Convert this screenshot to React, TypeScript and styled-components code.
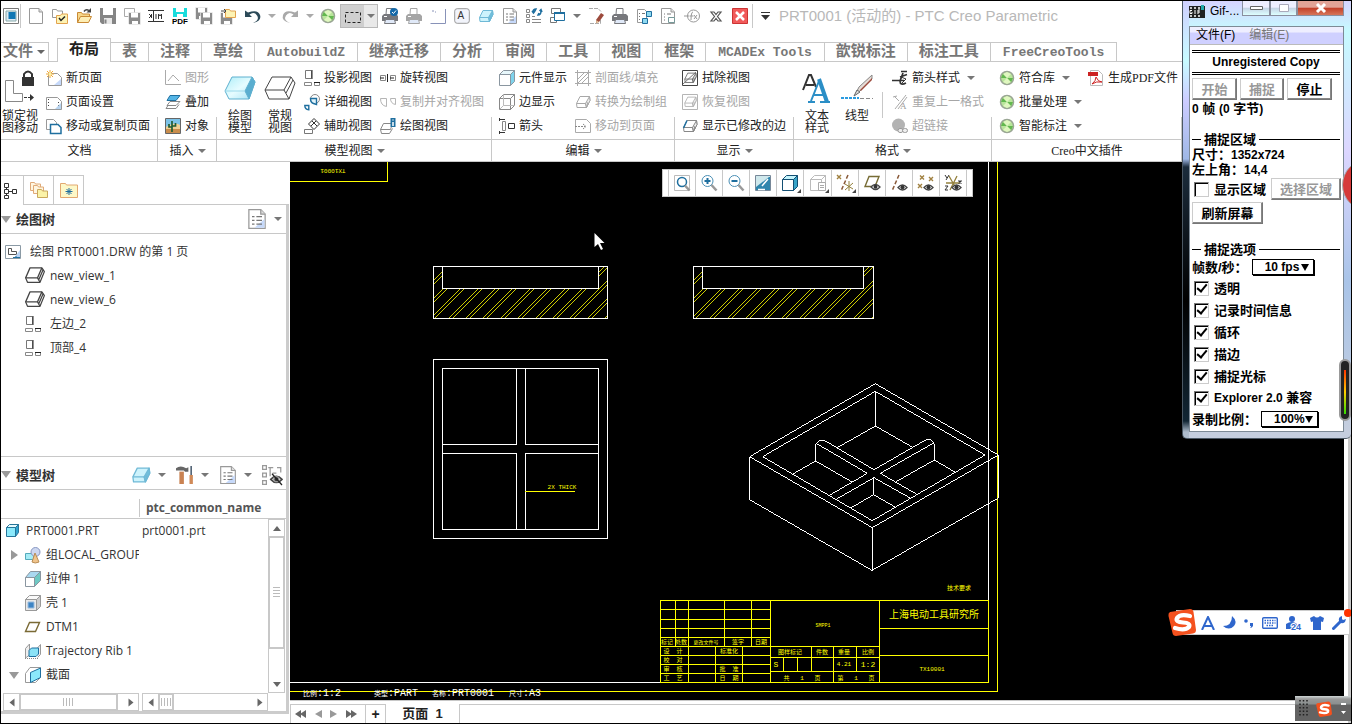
import React from 'react';
import styled, { createGlobalStyle, css } from 'styled-components';

const line = '#c8c8c8';
const sans = '"Liberation Sans", "Noto Sans CJK SC", sans-serif';
const tree = '"Open Sans", "Noto Sans CJK SC", sans-serif';

const GlobalStyle = createGlobalStyle`
  * { box-sizing: border-box; }
  body { margin: 0; background: #fff; color: #222; font: 12px/16px ${sans}; }
  button, input, select { font: inherit; color: inherit; margin: 0; }
  button { background: none; border: 0; padding: 0; cursor: pointer; }
  svg { display: block; flex: none; }
`;

/* ---------- icons ---------- */

const B = '#1f6f9f';

const box3d = (fill: string, side: string, stroke: string) => (
  <g stroke={stroke} strokeLinejoin="round">
    <path d="M1.5 9.5 5 2.5h9.5l.5 4-3.500 7H2z" fill={fill} />
    <path d="M10.500 9.500 14.500 2.500l.5 4-3.500 7z" fill={side} />
    <path d="M1.500 9.500h9l1 4M12 8l.8 3" fill="none" />
  </g>
);
const wireBox = (
  <g fill="#fff" stroke="#444" strokeLinejoin="round">
    <path d="M.5 9.500 4 1.500h9.500l2 3L12 13H2z" />
    <path d="M.5 9.500h9.500l2 3.500M10 9.500l3.500-8M11 11l3.500-8" fill="none" />
  </g>
);
const cube = (front: string, top: string, side: string, stroke: string) => (
  <g stroke={stroke} strokeLinejoin="round">
    <path d="M.5 4.500h11v11H.5z" fill={front} />
    <path d="m.5 4.500 4-4h11l-4 4z" fill={top} />
    <path d="m11.500 4.500 4-4v11l-4 4z" fill={side} />
  </g>
);
const page = (stroke = '#999') => (
  <g stroke={stroke} fill="#fff">
    <path d="M1.500.5h9.500l3.500 3.500v11.500h-13z" />
    <path d="M11 .5V4h3.500" fill="#ddd" />
  </g>
);
const listPage = (
  <g>
    {page()}
    <path d="m14 8-8 7h8z" fill="#c6d9fa" />
    <path d="M4 6h2M4 9h2M4 12h2M7.500 6H12M7.500 9H12M7.500 12H12" stroke="#777" />
  </g>
);
const disk = (x = 0, y = 0, c = '#858585') => (
  <g transform={`translate(${x} ${y})`}>
    <path d="M0 0h16v16H2l-2-2z" fill={c} />
    <path d="M3 0h10v7H3z" fill="#fff" />
    <path d="M4 10h8v6H4z" fill="#e8e8e8" />
    <path d="M5.500 11.500v4" stroke={c} strokeWidth="2" />
  </g>
);
const smallDisk = (x: number, y: number) => (
  <g transform={`translate(${x} ${y})`}>
    <path d="M-.5-.5h12v12h-11l-1-1z" fill="#8b8b8b" stroke="#fff" strokeWidth=".6" />
    <path d="M2 0h7v4.500H2zM3 8h6v3H3z" fill="#fff" />
  </g>
);
const folder = (x = 0, y = 0, s = '#e2a24e', f = '#fdf3b4') => (
  <path transform={`translate(${x} ${y})`} d="M.5 9.500v-8h4l1 1.500h5v6.500z" fill={f} stroke={s} />
);
const printer = (c: string) => (
  <g>
    <path d="M4.500.5h6.500v6h-7z" fill="#fff" stroke={c} />
    <path d="M2 6h12l2 2v5H0V8z" fill={c} />
    <path d="M3.500 11.500h9l1 4h-11z" fill="#e0e9f8" stroke={c} />
    <path d="M2 8.500h3" stroke="#fff" />
  </g>
);
const green = (
  <g>
    <circle cx="8" cy="8" r="6.500" fill="#b9e59b" stroke="#9aa694" strokeWidth="1.500" />
    <path d="M2 8 8 8 4 3.500M14 8H8l4 4.500" fill="#63b84f" />
    <path d="M4 4 8 8l4-4-4-2zM4 12l4-4 4 4-4 2z" fill="#e4f8c4" opacity=".9" />
  </g>
);
const viewTrio = (
  <g fill="#fff">
    <path d="M1.500.500h6v8h-6z" stroke="#777" />
    <path d="M8 0v9" stroke="#222" />
    <path d="M.5 12.500h7v3h-7zM10.500 12.500h5v3h-5z" stroke="#888" />
    <path d="M10 12.500h6" stroke="#222" />
  </g>
);
const eye = (x: number, y: number) => (
  <g transform={`translate(${x} ${y})`}>
    <path d="M0 3.500Q4.500-1.500 9 3.500 4.500 8.500 0 3.500z" fill="#fff" stroke="#444" strokeWidth="1.300" />
    <circle cx="4.500" cy="3.300" r="2" fill="#333" />
  </g>
);
const cross = (x: number, y: number, c = '#a08040', r = 2) => (
  <path d={`M${x - r} ${y - r}l${2 * r} ${2 * r}M${x + r} ${y - r}l${-2 * r} ${2 * r}`} stroke={c} strokeWidth="1.400" />
);

const icons: Record<string, React.ReactNode> = {
  window: <g><path d="M.5.5h15v15H.5z" fill="#fff" stroke="#777" /><path d="M3 3h10v10H3z" fill="#dce9f3" stroke="#8aa" /><path d="M5.500 4h7v7h-7z" fill="#1278b4" /></g>,
  newFile: page(),
  checkFiles: <g>{folder(0, 0, '#999', '#fff')}<path d="M4.500 15.500v-8h4l1-1.500h6v9.500z" fill="#fdf3b4" stroke="#e2a24e" /><path d="m7 10 2 2.500 4-4" stroke="#222" fill="none" strokeWidth="1.500" /></g>,
  open: <g><path d="M1.500 14.500v-10h4l1 1.500h7v3" fill="#f7d78a" stroke="#c98a35" /><path d="m1.500 14.500 3-6h11l-3 6z" fill="#fdeeb5" stroke="#c98a35" /><path d="M8 3.500q2-3 5-1" stroke="#444" fill="none" strokeWidth="1.500" /><path d="M15 0v4.500h-4.500z" fill="#444" /></g>,
  disk: disk(),
  disks: <g><path d="M.5.500h10v8H.5z" fill="#fff" stroke="#aaa" />{smallDisk(5, 5)}</g>,
  dim: <g stroke="#333" fill="none"><path d="M0 2.500h16M0 13.500h16M5.500 3v10M1 6l2 2-2 2M3.500 6v4M8 6v5M10.500 11V6l1.500 2 1.500-2v5" /></g>,
  pdfDisk: <g><path d="M1 0h14v9H1z" fill="#19dcdc" /><path d="M4 0h8v4H4zM5 6h6v3H5z" fill="#fff" /><text x="0" y="16" fontSize="8" fontWeight="700" fill="#000" fontFamily="Liberation Sans">PDF</text></g>,
  copyDisk: <g>{smallDisk(0, 0)}{smallDisk(5, 5)}</g>,
  swapDisk: <g>{smallDisk(1, 5)}{folder(5, 0)}<path d="M1 3h4M4 1l2 2-2 2" stroke="#444" fill="none" /></g>,
  undo: <path d="M1 2.500v6.500h7L5.500 6.500Q10 3 13 7.500T9 15q9-2 7-8T4 4.500z" fill="#2c4a58" />,
  redo: <path d="M15 2.500V9H8l2.500-2.500Q6 3 3 7.500T7 15q-9-2-7-8t12-2.500z" fill="#a9a9a9" />,
  green,
  marquee: <path d="M.5 3.500h15v10H.5z" fill="none" stroke="#222" strokeDasharray="3 2" />,
  printOk: <g>{printer('#77787c')}<circle cx="12" cy="4" r="4" fill="#1468a8" /><path d="m10 4 1.500 1.500L14 2.500" stroke="#fff" fill="none" /></g>,
  printGray: printer('#a5a5a5'),
  print: printer('#77787c'),
  corner: <path d="M.5 15.500h15V1M2 3h2M5 4h1" stroke="#8892b8" fill="none" />,
  letterA: <g><rect x=".7" y=".7" width="14.600" height="14.600" rx="2.500" fill="#f2f4fb" stroke="#999" /><text x="3.500" y="11" fontSize="10" fill="#333" fontFamily="Liberation Sans">A</text></g>,
  blueBox: box3d('#cdf3fc', '#6fbfdc', '#6fb9d6'),
  list: listPage,
  listSync: <g><path d="M.5 1.500h3v3h-3zM.5 6.500h3v3h-3zM.5 11.500h3v3h-3z" fill="#fff" stroke="#888" /><path d="M6 8.500h3M6 11.500h9M6 14.500h9" stroke="#888" /><path d="M7 4q0-3 3-3l-1 2M15 3q0 4-3 4l1-2M6 3l1.500 2L9 3M13.500 3 15 1.500 16 4" stroke={B} fill="none" strokeWidth="1.500" /></g>,
  cascade: <g fill="#fff"><path d="M1.500.5h9v5h-9zM.5 9.500h6v5h-6z" stroke="#777" /><path d="M4.500 4.500h10v8h-10z" stroke={B} /><path d="M4 5h11" stroke={B} strokeWidth="2" /></g>,
  erasePage: <g><path d="M1 .5h9l3 3M12.500 12v3.500H1" fill="none" stroke="#aaa" strokeDasharray="4 1" /><path d="m8 12 5-7 3 2-5 7-3 1z" fill="#9c4a3c" /><path d="m8 12 3 2-2.500 1.500z" fill="#e7c9a0" /></g>,
  views: <g><path d="M1.500 1.500h7l2 2v11h-9z" fill="#fff" stroke="#999" /><path d="M3 5.500h1M3 8.500h1M3 11.500h1M6 5.500h3" stroke="#777" /><path d="M10.500 3.500h5v5h-5zM6.500 10.500h5v5h-5z" fill="#8fd9f0" stroke={B} /></g>,
  pageCube: <g>{page()}<path d="M4 6h1M4 9h1M4 12h1M7 6h4" stroke="#777" /><path d="M8.500 9.500h6v5h-6z" fill="#fff" stroke="#799" /></g>,
  fx: <g fill="none" stroke="#999"><circle cx="9.500" cy="8" r="6" /><path d="M0 8h5M9 4q-2 0-2 8M5.500 8h4M10 7l3 4M13 7l-3 4" /></g>,
  closeX: <g stroke="#555" fill="#fff" strokeWidth="1.200"><path d="M3 4h3l2 2.500L10 4h3l-3.500 4.500L13 13h-3l-2-2.500L6 13H3l3.500-4.500z" /></g>,
  redX: <g><path d="M.5.500h15v15H.5z" fill="#f15a5a" stroke="#c33" /><path d="m4 4 8 8M12 4l-8 8" stroke="#fff" strokeWidth="2.500" /></g>,
  newPage: <g><path d="M2.500 3.500h9l4 4v8h-13z" fill="#fff" stroke="#999" /><path d="m15 9-7 6h7z" fill="#c6d9fa" /><path d="M4 0v8M0 4h8M1 1l6 6M7 1 1 7" stroke="#f0a93a" /><circle cx="4" cy="4" r="1.500" fill="#fff3a0" /></g>,
  pageSetup: <g><path d="M.5 3.500h11l4 4v8H.5z" fill="#fff" stroke="#999" /><path d="M2.500 5v9M12.500 8v6" stroke="#444" strokeDasharray="1 2" /><path d="m15 9-6 6h6z" fill="#b8d4f0" /></g>,
  movePage: <g fill="#fff"><path d="M.5 1.500h7l3 3v7H.5z" stroke="#999" /><path d="M4.500 6.500H12l3 3v6H4.500z" stroke={B} strokeWidth="1.500" /></g>,
  graph: <path d="M.5 0v14.500H16M3 11l5-6 6 6" fill="none" stroke="#aaa" />,
  overlay: <g fill="#fff" stroke="#888"><path d="m5 1.500-3 5h9l4-5z" fill="#54b5e6" stroke={B} /><path d="m5 7.500-3 4h9l4-4zM3 11.500l-2 3h10l3-4" /></g>,
  object: <g><path d="M.5.5h15v15H.5z" fill="#7cc3e8" stroke="#666" /><path d="M1 11h14v4H1z" fill="#c98d4c" /><path d="M1 9q9-6 14-2v4H1z" fill="#f1cf92" /><path d="M7 14V3M4 6v3h3M10.500 5v3H7" stroke="#205e35" strokeWidth="1.700" fill="none" /></g>,
  viewTrio,
  detail: <g fill="none"><circle cx="11" cy="5" r="4.500" stroke="#888" /><path d="M6.500 4.500h6v6l-3-1q-3-1-3-5z" stroke={B} strokeWidth="1.400" fill="#e1f3fa" /><path d="M.8 11.500h4v4.300q-4-.5-4-4.300z" stroke={B} strokeWidth="1.400" /></g>,
  auxiliary: <g fill="#fff" stroke="#777"><path d="m10 .5 5.500 5.500-5.500 5.500L4.500 6z" stroke="#333" /><path d="m8 3 5 5M12 3 7 8" stroke="#333" /><path d="M.5 11.500h8v4h-8z" /></g>,
  revolved: <g fill="#fff" stroke="#888"><path d="M.5 5.500h5v5h-5zM10.500 5.500h5v5h-5z" /><path d="M0 8h4M7.500 4v8M10 8h4" stroke="#222" /></g>,
  alignViews: <g fill="none" stroke="#b5b5b5"><path d="M.5 4.500h6v8q-6-1-6-8zM10.500 4.500h5v6q-5-1-5-6z" /></g>,
  drawView: <g>{<path d="m.5 11.500 3-6h9l-2 6zM.5 11.500l1 4h8l3-5" fill="#fff" stroke="#888" />}<path d="M10.500 0h5v9h-5z" fill={B} /><path d="M13 1.500v1M13 4v4" stroke="#fff" strokeWidth="1.500" /></g>,
  partDisplay: cube('#fff', '#e8f8fc', '#7fd3ec', '#8a96a0'),
  edgeDisplay: <g>{cube('#fff', '#fff', '#fff', '#888')}<path d="M4.500.5v11h11M4.500 11.500l-4 4" stroke="#bbb" fill="none" /></g>,
  arrowView: <g fill="#fff" stroke="#333"><path d="M3.500 3.500h3v9h-3z" stroke="#888" /><path d="M0 1.500h6M0 14.500h6" /><path d="M.5 0v3M.5 13v3M9.500 5.500h6v5h-6z" /></g>,
  hatch: <g stroke="#aaa" fill="none"><path d="M2.500 0v16M13.500 0v16M0 2.500h16M0 13.500h16" /><path d="m3 9 6-6M3 13l10-10M7 13l6-6" /></g>,
  grayBox: box3d('#fff', '#eee', '#a8a8a8'),
  toPage: <g stroke="#aaa" fill="#fff"><path d="M.5 1.500h11l4 4v9H.5z" /><path d="M0 8.500h10M8 6l3 2.500L8 11" stroke="#888" strokeDasharray="2 1" /></g>,
  eraseView: <g><path d="M.5.500h15v15H.5z" fill="#fff" stroke="#444" /><g transform="translate(1.500 1) scale(.85)">{box3d('#fff', '#ddd', '#666')}</g><path d="m1 14 13-12" stroke="#777" /></g>,
  restoreView: <g><path d="M.5.500h15v15H.5z" fill="#fff" stroke="#b5b5b5" /><g transform="translate(1.500 1) scale(.85)">{box3d('#fff', '#eee', '#b0b0b0')}</g></g>,
  modEdge: <g>{box3d('#fff', '#eee', '#888')}<path d="m1.500 10 3.500-7.500" stroke={B} strokeWidth="1.500" /></g>,
  arrowStyle: <g stroke="#333" fill="none"><path d="M0 10.500h12M15 1.500H9M15 4.500 8 7M14 13q-6 3-6-2l3-8" strokeWidth="1.700" /><path d="m9 7 5 2-5 5" /></g>,
  repeatFmt: <g stroke="#aaa" fill="none"><path d="m1 3 4-1M2 2l5 5M14 1 3 15M6 15 15 3" /><text x="8" y="15" fontSize="9" fill="#999" stroke="none" fontFamily="Liberation Serif">A</text></g>,
  link: <g><circle cx="6.500" cy="7" r="6.500" fill="#b3b3b3" /><rect x="6" y="10.500" width="5" height="4" rx="2" fill="#eee" stroke="#999" /><rect x="10.500" y="10.500" width="5" height="4" rx="2" fill="#eee" stroke="#999" /></g>,
  pdf: <g><path d="M2.500.5h8l4 4v11h-12z" fill="#fff" stroke="#bbb" /><path d="M0 2h10v4H0z" fill="#c22" /><path d="M4 14q4-3 4-7 2 5 6 5-6-1-10 2" stroke="#c22" fill="none" /></g>,
  treeNodes: <g fill="#fff" stroke="#333"><path d="M2.500 4v9M4 8.500h5" /><path d="M.5.500h4v4h-4zM.5 6.500h4v4h-4zM.5 12.500h4v3h-4zM8.500 6.500h4v4h-4z" /></g>,
  drawSheet: <g><path d="M.5 1.500h15v13H.5z" fill="#fff" stroke="#8b9aa5" /><path d="M3.500 4.500h3v3h5v3h-8z" fill="none" stroke="#555" /><path d="m15 6-6 8h6z" fill="#b9d4f5" /><path d="M8 13.500h7M11 12v2" stroke={B} /></g>,
  wireBox,
  folders: <g>{folder(-1, -1, '#e0aa78', '#fff6e0')}{folder(2, 2, '#e0aa78', '#fff6e0')}{folder(6, 6, '#c9a85c', '#fbf3a8')}</g>,
  starFolder: <g><path d="M-.5 15.500v-14h5l1 1.500h11v12.500z" fill="#fdf8c8" stroke="#e2a870" /><path d="M8 6v7M4.500 9.500h7M5.500 7l5 5M10.500 7l-5 5" stroke={B} /></g>,
  part: <g stroke="#27759a"><path d="M1.500 4.500h9v9h-9z" fill="#8be9fb" /><path d="m1.500 4.500 3-3h9l-3 3z" fill="#e5fbff" /><path d="m10.500 4.500 3-3v8l-3 4z" fill="#2fa3cf" /></g>,
  group: <g><path d="M.5 6.500h8v6h-8z" fill="#a6ecf6" stroke="#5ab" /><circle cx="10.500" cy="5" r="4.500" fill="#cdd7f0" stroke="#8797c2" /><path d="m10 6 4 9q-4 2-7 0z" fill="#f0c48c" stroke="#b98d55" /></g>,
  extrude: <g stroke="#8a96a0"><path d="M.5 6.500h9v9h-9z" fill="#fff" /><path d="m.5 6.500 5-6h10l-6 6z" fill="#a9d8f0" /><path d="m9.500 6.500 6-6v9l-6 6z" fill="#6ec9c4" /></g>,
  shell: <g>{cube('#e8e8e8', '#fafafa', '#ccc', '#999')}<path d="M3 7h6v6H3z" fill="#3d84c4" stroke="#9bd" /></g>,
  datum: <path d="M4.500 3.500h10l-4 9H.5z" fill="none" stroke="#7a6a35" strokeWidth="1.400" />,
  rib: <g><path d="M.5 5.500 4.500 1v11l-4 3zM12.500 5l3-3.500v10l-3 3" fill="#eee" stroke="#999" /><path d="M4 7.500 6.500 5h7v6L11 13.500H4z" fill="#8be3f7" stroke={B} /><path d="M0 15.500h13" stroke="#888" strokeDasharray="1 1" /></g>,
  section: <g><path d="M.5 6.500 5 .500h10.500v10l-5 5H.5z" fill="#fff" stroke="#999" /><path d="M5.500 5.500 15.500 1v9.500l-10 5z" fill="#8be9fb" stroke={B} /></g>,
  tools: <g><path d="M0 2q4-3 9 0l2-1v4H8L7 4 0 4z" fill="#666" /><path d="M3 5h4v11H3z" fill="#c98252" /><path d="M13.500 0v8" stroke="#567" strokeWidth="1.500" /><path d="M12 8h3v8h-3z" fill="#d08a58" /></g>,
  treeHide: <g fill="none" stroke="#999"><path d="M.5.500h3v3h-3zM.5 6.500h3v3h-3zM.5 12.500h3v3h-3zM8.500 6.500h3M5 2h4M6.500 2v7M12 2h3v4" /><g transform="translate(7 8)">{eye(0, 0)}</g><path d="m8 7 8 9" stroke="#222" /></g>,
  zoomFit: <g fill="none"><path d="M.5.500h15v15H.5z" stroke="#bbb" /><circle cx="8" cy="7" r="4.500" stroke={B} strokeWidth="1.500" /><path d="m11 10.500 4.500 5" stroke="#999" strokeWidth="2.500" /></g>,
  zoomIn: <g fill="none"><circle cx="6.500" cy="6" r="5.500" stroke="#4a8fb5" /><path d="M6.500 3v6M3.500 6h6" stroke={B} strokeWidth="2" /><path d="m10.500 10 5 5.500" stroke="#999" strokeWidth="2.500" /></g>,
  zoomOut: <g fill="none"><circle cx="6.500" cy="6" r="5.500" stroke="#4a8fb5" /><path d="M3.500 6h6" stroke={B} strokeWidth="2" /><path d="m10.500 10 5 5.500" stroke="#999" strokeWidth="2.500" /></g>,
  repaint: <g><path d="M.5.500h15v15H.5z" fill="#cfe8ec" stroke="#789" /><path d="M1 12 14 2h1v13H1z" fill="#2f86ad" /><path d="M13 4 7 11M3 14.500h7" stroke="#fff" strokeWidth="1.500" /></g>,
  shade: cube('#fff', '#c4f4fc', '#39a5c9', '#134f73'),
  savedView: <g>{cube('#fff', '#fff', '#fff', '#bbb')}<path d="M8.500 7.500h7v8h-7z" fill="#fff" stroke="#aaa" /><path d="M10 10.500h4M10 12.500h4" stroke="#aaa" /></g>,
  datumAll: <g>{cross(2, 2)}<path d="M11 0 4 16" stroke="#8a5a3a" strokeWidth="1.500" strokeDasharray="4 2" /><path d="M12 6v10M8 9l8 5M16 8l-8 7" stroke="#93803c" /></g>,
  planeEye: <g><path d="M5 1.500h10l-4 10H1z" fill="none" stroke="#776c35" strokeWidth="1.400" />{eye(7, 8.500)}</g>,
  axisEye: <g><path d="M8 0 1 16" stroke="#8a5a3a" strokeWidth="1.500" strokeDasharray="4 2" />{eye(7, 9)}</g>,
  pointEye: <g>{cross(4, 2.500)}{cross(13, 4)}{cross(2, 11)}{eye(6, 9)}</g>,
  csysEye: <g><path d="M1 8h14M4 1l8 14M12 1 5 15" stroke="#93803c" strokeWidth="1.300" />{cross(15, 7, '#333', 1.5)}<path d="m0 0 2 3M4 0 1 5M0 11h3l-3 4h3" stroke="#333" fill="none" />{eye(7, 9)}</g>,
};

const Icon = ({ name, size = 16 }: { name: string; size?: number }) => (
  <svg width={size} height={size} viewBox="0 0 16 16" overflow="visible" aria-hidden="true">{icons[name]}</svg>
);

const Caret = styled.span<{ $color?: string }>`
  flex: none;
  width: 0;
  height: 0;
  border: 4px solid transparent;
  border-top-color: ${p => p.$color ?? '#777'};
  border-bottom: 0;
`;

/* ---------- frame ---------- */

const Page = styled.div`
  position: relative;
  min-height: 100vh;
  display: flex;
  flex-direction: column;
  border: 1px solid #000;
  overflow: hidden;
  background: #fff;
`;
const Toolbar = styled.header`
  display: flex;
  align-items: center;
  height: 30px;
  margin-bottom: 7px;
  padding-left: 1px;
`;
const ToolButton = styled.button<{ $w?: number }>`
  flex: none;
  width: ${p => p.$w ?? 24}px;
  height: 24px;
  display: flex;
  align-items: center;
  justify-content: center;
`;
const SelectTool = styled.div`
  display: flex;
  height: 24px;
  width: 38px;
  flex: none;
  background: #cfcfcf;
  border: 1px solid #b8b8b8;
`;
const SelectCaret = styled(ToolButton)`
  background: #e9e9e9;
  height: 22px;
`;
const ToolDivider = styled.span<{ $after?: number }>`
  flex: none;
  width: 1px;
  height: 24px;
  margin-right: ${p => p.$after ?? 0}px;
  background: ${line};
`;
const AppTitle = styled.h1`
  margin: 0 0 0 2px;
  font-size: 15px;
  font-weight: 400;
  color: #b8b8b8;
  white-space: nowrap;
`;

const TabRow = styled.nav`
  display: flex;
  align-items: flex-end;
  height: 24px;
  border-bottom: 1px solid ${line};
`;
const Tab = styled.button<{ $latin?: boolean }>`
  flex: none;
  height: 19px;
  padding: 0 ${p => (p.$latin ? 12 : 11)}px;
  border-top: 1px solid ${line};
  border-right: 1px solid ${line};
  font: bold ${p => (p.$latin ? 13 : 15)}px/17px "Liberation Mono", "Noto Sans CJK SC", monospace;
  color: #777;
  white-space: nowrap;
`;
const FileTab = styled(Tab)`
  width: 48px;
  padding: 0 0 0 2px;
  margin-right: 8px;
  display: flex;
  align-items: center;
  gap: 4px;
`;
const ActiveTab = styled(Tab)`
  height: 24px;
  margin-bottom: -1px;
  border-left: 1px solid ${line};
  background: #fff;
  color: #222;
  line-height: 24px;
`;

const Ribbon = styled.section`
  display: flex;
  height: 100px;
  border-bottom: 1px solid ${line};
  font-family: "Liberation Serif", "Noto Sans CJK SC", serif;
`;
const Group = styled.div<{ $w: number }>`
  flex: none;
  width: ${p => p.$w}px;
  display: flex;
  flex-direction: column;
  background: linear-gradient(${line}, ${line}) right bottom / 1px 44px no-repeat;
`;
const GroupBody = styled.div`
  display: flex;
  height: 77px;
  padding-top: 4px;
`;
const GroupLabel = styled.div`
  flex: 1;
  display: flex;
  align-items: center;
  justify-content: center;
  gap: 4px;
  border-top: 1px solid ${line};
`;
const Column = styled.div<{ $left: number; $w?: number }>`
  flex: none;
  margin-left: ${p => p.$left}px;
  ${p => p.$w && css`width: ${p.$w}px;`}
`;
const Command = styled.button<{ $off?: boolean }>`
  display: flex;
  align-items: center;
  gap: 4px;
  height: 24px;
  white-space: nowrap;
  color: ${p => (p.$off ? '#a6a6a6' : '#222')};
  ${Caret} { margin-left: 3px; }
`;
const BigCommand = styled.button<{ $w: number }>`
  flex: none;
  width: ${p => p.$w}px;
  height: 72px;
  display: flex;
  flex-direction: column;
  align-items: center;
  line-height: 12px;
`;
const BigArt = styled.span`
  height: 44px;
  display: flex;
  align-items: center;
`;
const ShortRule = styled.span`
  width: 1px;
  height: 26px;
  margin: 26px 9px 0 8px;
  background: ${line};
`;

const Work = styled.main`
  flex: 1;
  display: flex;
  min-height: 0;
`;

/* ---------- side panel ---------- */

const Side = styled.aside`
  flex: none;
  width: 289px;
  padding: 13px 1px 9px 0;
  display: flex;
  flex-direction: column;
  font-family: ${tree};
  color: #333;
`;
const SideTabs = styled.div`
  display: flex;
  height: 30px;
`;
const SideTab = styled.button<{ $active?: boolean }>`
  width: ${p => (p.$active ? 22 : 30)}px;
  display: flex;
  align-items: center;
  justify-content: center;
  border-top: 1px solid ${line};
  ${p => !p.$active && css`border-left: 1px solid ${line}; border-bottom: 1px solid ${line};`}
`;
const SideTabRest = styled.span`
  flex: 1;
  border-left: 1px solid ${line};
  border-bottom: 1px solid ${line};
`;
const Panels = styled.div`
  flex: 1;
  display: flex;
  flex-direction: column;
  border: solid #ccc;
  border-width: 0 3px 3px 0;
`;
const PanelHead = styled.div<{ $h: number; $top?: number }>`
  flex: none;
  display: flex;
  align-items: center;
  gap: 10px;
  height: ${p => p.$h}px;
  padding: ${p => p.$top ?? 0}px 4px 0 0;
  border-bottom: 1px solid ${line};
`;
const Fold = styled(Caret)`
  border-width: 7px 5px 0;
  border-top-color: #999;
`;
const PanelTitle = styled.h2`
  flex: 1;
  margin: 0 0 0 -5px;
  font-size: 13px;
  font-weight: 700;
`;
const HeadTool = styled.button`
  display: flex;
  align-items: center;
  gap: 7px;
`;
const DrawTree = styled.ul`
  flex: none;
  height: 223px;
  margin: 0;
  padding: 6px 0 0 4px;
  list-style: none;
  border-bottom: 1px solid ${line};
`;
const TreeItem = styled.li<{ $depth: number }>`
  display: flex;
  align-items: center;
  gap: ${p => (p.$depth ? 5 : 9)}px;
  height: 24px;
  padding-left: ${p => p.$depth * 20}px;
  > span { width: 20px; }
`;
const ModelArea = styled.div`
  flex: 1 1 0;
  min-height: 0;
  display: grid;
  grid-template: 29px 1fr / 1fr 18px;
`;
const ColumnHead = styled.div`
  grid-column: 1 / -1;
  display: flex;
  align-items: flex-end;
  padding: 0 0 1px 138px;
  border-bottom: 1px solid ${line};
  span { border-left: 1px solid ${line}; padding-left: 6px; font-weight: 700; line-height: 18px; font-size: 12px; color: #555; }
`;
const TableClip = styled.div`
  position: relative;
  overflow: hidden;
`;
const ModelTable = styled.table`
  position: absolute;
  inset: 0 0 auto 0;
  width: 100%;
  table-layout: fixed;
  border-collapse: collapse;
  td { height: 24px; padding: 0; overflow: hidden; white-space: nowrap; }
  td:first-child { width: 138px; }
  td + td { padding-left: 3px; }
`;
const NodeCell = styled.div<{ $root?: boolean }>`
  display: flex;
  align-items: center;
  gap: 5px;
  padding-left: ${p => (p.$root ? 4 : 8)}px;
  height: 24px;
`;
const Twist = styled.span<{ $dir?: 'right' | 'down' }>`
  flex: none;
  width: 11px;
  display: flex;
  &::before {
    content: '';
    border: 5px solid transparent;
    ${p => p.$dir === 'right' && css`border-left: 7px solid #999; border-right: 0; margin-left: 2px;`}
    ${p => p.$dir === 'down' && css`border-top: 7px solid #999; border-bottom: 0;`}
  }
`;
const VScroll = styled.div`
  display: flex;
  flex-direction: column;
  margin-right: 1px;
  border: 1px solid ${line};
`;
const HScrolls = styled.div`
  flex: none;
  display: flex;
  gap: 3px;
  height: 18px;
  padding: 0 18px 0 2px;
`;
const HScroll = styled.div<{ $w: number }>`
  display: flex;
  width: ${p => p.$w}px;
  border: 1px solid ${line};
`;
const Arrow = styled.button<{ $turn: number }>`
  flex: none;
  min-width: 15px;
  height: 16px;
  display: flex;
  align-items: center;
  justify-content: center;
  &::before { content: ''; border: 4px solid transparent; border-bottom: 5px solid #666; border-top: 0; transform: rotate(${p => p.$turn}deg); }
`;
const Thumb = styled.span<{ $size: number; $vertical?: boolean }>`
  flex: none;
  display: flex;
  align-items: center;
  justify-content: center;
  ${p => (p.$vertical
    ? css`height: ${p.$size}px; border: solid ${line}; border-width: 2px 1px; &::before { content: ''; width: 7px; height: 11px; background: repeating-linear-gradient(#bbb 0 1px, #fff 1px 3px); }`
    : css`width: ${p.$size}px; border: solid ${line}; border-width: 1px 2px; &::before { content: ''; width: 11px; height: 8px; background: repeating-linear-gradient(90deg, #bbb 0 1px, #fff 1px 3px); }`)}
`;
const Track = styled.span`
  flex: 1;
`;

/* ---------- drawing ---------- */

const Stage = styled.div`
  flex: 1;
  min-width: 0;
  display: flex;
  flex-direction: column;
`;
const Canvas = styled.div`
  position: relative;
  flex: 1;
  background: #000;
  overflow: hidden;
`;
const ViewBar = styled.div`
  position: absolute;
  top: 7px;
  left: 372px;
  display: flex;
  width: 311px;
  height: 28px;
  padding: 0 5px;
  background: #fff;
  border: 1px solid ${line};
`;
const ViewTool = styled.button`
  position: relative;
  flex: 1;
  display: flex;
  align-items: center;
  justify-content: center;
  border-left: 1px solid ${line};
  &:last-child { border-right: 1px solid ${line}; }
`;
const CornerMark = styled.span`
  position: absolute;
  right: 2px;
  bottom: 3px;
  border: 2px solid;
  border-color: transparent #444 #444 transparent;
`;
const SheetBar = styled.footer`
  display: flex;
  height: 23px;
  padding-top: 3px;
  border-top: 1px solid ${line};
`;
const SheetNav = styled.div`
  display: flex;
  align-items: center;
  width: 75px;
  padding-left: 4px;
  border-top: 1px solid ${line};
  border-left: 1px solid ${line};
`;
const AddSheet = styled.button`
  width: 21px;
  border: solid ${line};
  border-width: 1px 1px 0;
  font-weight: 700;
  font-size: 14px;
`;
const SheetTab = styled.button`
  width: 73px;
  font-weight: 700;
  font-size: 13px;
`;
const SheetRest = styled.div`
  flex: 1;
  border: solid ${line};
  border-width: 1px 0 0 1px;
`;
const Edge = styled.div`
  flex: none;
  width: 7px;
  border-left: 4px solid #fff;
  background: #c8c8c8;
`;

const hatchLines = (start: number, step: number, count: number) =>
  Array.from({ length: count }, (_, i) => {
    const x = Math.round(start + i * step);
    return `M${x} 319l54-54M${x + 4} 319l54-54`;
  }).join('');

const cellText: [number, number, string, number?][] = [
  [667, 644, '标记'], [681, 644, '处数'], [706, 644, '更改文件号', 5], [738, 644, '签字'], [761, 644, '日期'],
  [673, 653, '设  计'], [729, 653, '标准化'], [673, 662, '校  对'], [673, 671, '审  核'], [729, 671, '批  准'],
  [673, 680, '工  艺'], [729, 680, '日  期'], [790, 654, '图样标记'], [822, 654, '件数'], [844, 654, '重量'],
  [868, 654, '比例'], [776, 667, 'S', 8], [844, 666, '4.21'], [868, 667, '1:2', 8], [802, 680, '共   1   页'],
  [856, 680, '第   1   页'], [823, 627, 'SMPP1', 5], [932, 671, 'TX10001', 6], [959, 590, '技术要求'], [562, 489, '2X THICK', 6],
];

const Drawing = () => (
  <svg width="1054" height="538" viewBox="290 162 1054 538" fill="none" stroke="#fff" shapeRendering="crispEdges">
    <clipPath id="cutA"><path d="M433 266h9v22h156v-22h9v52H433z" /></clipPath>
    <clipPath id="cutB"><path d="M693 266h9v22h161v-22h10v52H693z" /></clipPath>
    <path d="M988.500 162v438M290 682.500h370" />
    <path d="M290 181.500h97.500V162M997.500 162v529.500H290" stroke="#ff0" />
    <path d={hatchLines(378, 17.4, 14)} clipPath="url(#cutA)" stroke="#ff0" shapeRendering="auto" strokeWidth=".8" />
    <path d={hatchLines(637, 18, 14)} clipPath="url(#cutB)" stroke="#ff0" shapeRendering="auto" strokeWidth=".8" />
    <path d="M433.500 266.500h174v52h-174zM442.500 266.500v22h156v-22M693.500 266.500h180v52h-180zM702.500 266.500v22h161v-22" />
    <path d="M433.500 359.500h174v179h-174zM442.500 368.500h156v161h-156zM442.500 444.500h74v-76M525.500 368.500v76h73M442.500 453.500h74v76M525.500 529.500v-76h73" />
    <path d="M525 491.500h50" stroke="#ff0" />
    <g transform="translate(740 375) scale(.33333)">
      <g strokeWidth="3">
        <path d="M29 245 406 26 775 240 397 458zV374L396 586 775 369V240M397 458V586" />
        <path d="M68 245 406 49 735 240 397 437zM406 49V153M292 218 406 153 516 216" />
        <path d="M402 284 258 199Q240 190 227 207V258L336 321M227 258 159 297M232 207 382 295 268 361" />
        <path d="M402 284 555 196Q572 187 583 207V255L467 321M583 255 646 292M579 205 421 295 531 358" />
        <path d="M288 373 402 308 512 370M401 308V359M332 399 401 359 467 397" />
      </g>
    </g>
    <path stroke="#ff0" d="M660.500 600.500h328v82h-328zM660 609.500h110M660 619.500h110M660 628.500h110M660 637.500h110M660 646.500h219M660 655.500h110M660 664.500h110M660 673.500h110M675.500 600v46M688.500 600v82M724.500 600v46M751.500 600v46M770.500 600v82M715.500 646v36M742.500 646v36M879.500 600v82M879 628.500h109M879 655.500h109M770 657.500h109M770 671.500h109M811.500 646v25M833.500 646v36M856.500 646v25M783.500 657v14M797.500 657v14" />
    <g fill="#ff0" stroke="none" fontFamily='"Liberation Mono", "Noto Sans CJK SC", monospace' fontSize="6" textAnchor="middle" shapeRendering="auto">
      {cellText.map(([x, y, t, size]) => <text key={`${x}-${y}`} x={x} y={y} fontSize={size ?? 6} xmlSpace="preserve">{t}</text>)}
      <text x="934" y="618" fontSize="10">上海电动工具研究所</text>
      <text transform="rotate(180 333 171)" x="333" y="173" fontSize="6">TX10001</text>
    </g>
    <g fill="#fff" stroke="none" fontFamily='"Liberation Mono", "Noto Sans CJK SC", monospace' fontSize="10">
      {([[303, '比例', ':1:2'], [374, '类型', ':PART'], [432, '名称', ':PRT0001'], [509, '尺寸', ':A3']] as [number, string, string][]).map(([x, a, b]) => (
        <text key={x} x={x} y="696"><tspan fontSize="7">{a}</tspan>{b}</text>
      ))}
    </g>
    <path d="M594.500 233v14l3.500-3 3 6 2-1-3-6h4.500z" fill="#fff" stroke="none" shapeRendering="auto" />
  </svg>
);

/* ---------- capture window ---------- */

const GifWindow = styled.section`
  position: absolute;
  top: 0;
  right: 0;
  width: 169px;
  padding: 0 7px 6px 6px;
  border: 1px solid #4b5864;
  border-width: 0 0 1px 1px;
  border-radius: 0 0 5px 5px;
  background:
    linear-gradient(#cfd0ff 0, #c8fbff 60px, #ccccff 100px, #9fb8e6 158px, #1b2c3c 166px, #000 300px, #122634 420px, #aebccc 431px) left / 6px 100% no-repeat,
    linear-gradient(#d6d4ff 0, #c6faff 30px, #dcd6ff 150px, #a9c4e8 280px, #c5cede 431px);
  font: bold 12px/15px ${sans};
  color: #000;
`;
const GifTitle = styled.div`
  display: flex;
  height: 25px;
  font-weight: 400;
  line-height: 20px;
  > svg { margin-top: 3px; }
`;
const GifName = styled.span`
  margin-left: 5px;
  width: 32px;
`;
const Caption = styled.button<{ $w: number; $red?: boolean }>`
  width: ${p => p.$w}px;
  height: 15px;
  border: 1px solid #8a8f9f;
  border-top: 0;
  background: ${p => (p.$red ? 'linear-gradient(#e2a396 45%, #c33f28 50%, #d6745a)' : 'linear-gradient(#eef 45%, #c4d2e4 50%, #dff)')};
  display: flex;
  align-items: center;
  justify-content: center;
`;
const GifBody = styled.div`
  height: 406px;
  border: 1px solid #7d8a96;
  background: #fff;
`;
const GifMenu = styled.div`
  display: flex;
  gap: 14px;
  height: 18px;
  padding-left: 6px;
  border-bottom: 1px solid #bbb;
  background: linear-gradient(#eef 30%, #cfd0ff 35%);
  button { font-weight: 400; line-height: 17px; }
  button + button { color: #777; }
`;
const GifContent = styled.div`
  padding: 5px 3px 0 2px;
`;
const Notice = styled.p`
  margin: 0 0 3px;
  text-align: center;
  line-height: 19px;
  border: solid #000;
  border-style: double none;
  border-width: 3px 0;
`;
const GifRow = styled.div<{ $h: number; $gap?: number }>`
  display: flex;
  align-items: center;
  gap: ${p => p.$gap ?? 3}px;
  height: ${p => p.$h}px;
  font-size: 13px;
  white-space: nowrap;
`;
const GifButton = styled.button<{ $w: number }>`
  flex: none;
  width: ${p => p.$w}px;
  height: 22px;
  border: 1px solid #c8c8c8;
  box-shadow: inset -1px -1px 0 #888;
  border-color: #ccc #777 #777 #ccc;
  white-space: nowrap;
  &:disabled { color: #999; }
`;
const Legend = styled.div`
  display: flex;
  align-items: center;
  gap: 3px;
  height: 15px;
  font-size: 13px;
  margin-top: 15px;
  &::before, &::after { content: ''; height: 1px; background: #000; width: 9px; }
  &::after { flex: 1; }
`;
const LegendLow = styled(Legend)`
  margin-top: 17px;
`;
const Line = styled.div`
  height: 15px;
  span { font-size: 13px; }
`;
const Check = styled.input`
  appearance: none;
  flex: none;
  width: 15px;
  height: 15px;
  margin: 0 2px 0 2px;
  border: 1px solid #777;
  border-right-color: #ccc;
  border-bottom-color: #ccc;
  box-shadow: inset 1px 1px 0 #000;
  display: grid;
  place-items: center;
  &:checked::after { content: ''; width: 4px; height: 8px; margin: 0 0 2px 1px; border: solid #000; border-width: 0 2px 2px 0; transform: rotate(40deg); }
`;
const Option = styled.label`
  display: flex;
  align-items: center;
  gap: 3px;
  height: 22px;
  font-size: 13px;
  white-space: nowrap;
`;
const Latin = styled.span`
  font-size: 12px;
`;
const Picker = styled.span<{ $w: number }>`
  display: flex;
  align-items: center;
  width: ${p => p.$w}px;
  height: 16px;
  margin-left: 4px;
  border: 1px solid #000;
  box-shadow: 1px 1px 0 #000;
  font-size: 12px;
  select { flex: 1; min-width: 0; appearance: none; border: 0; background: none; padding: 0 0 0 12px; height: 14px; line-height: 14px; }
`;
const Down = styled(Caret)`
  margin-right: 4px;
  border-width: 7px 4px 0;
  border-top-color: #000;
`;

/* ---------- desktop overlays ---------- */

const RedDot = styled.div`
  position: absolute;
  top: 158px;
  right: -43px;
  width: 52px;
  height: 52px;
  border-radius: 50%;
  background: #d63a3a;
  border: 1px solid #aaa;
`;
const Meter = styled.div`
  position: absolute;
  top: 358px;
  right: 0;
  width: 12px;
  height: 62px;
  padding: 9px 3px 6px 3px;
  border: 2px solid #999;
  border-radius: 6px;
  background: #222;
  &::before { content: ''; display: block; width: 2px; height: 44px; background: linear-gradient(#f30, #fc0 50%, #3d0); }
`;
const InputBar = styled.div`
  position: absolute;
  right: 2px;
  top: 609px;
  height: 25px;
  width: 173px;
  display: flex;
  align-items: center;
  gap: 8px;
  padding-left: 25px;
  background: #fff;
  border: solid #ccc;
  border-width: 1px 0;
`;
const Logo = styled.span`
  position: absolute;
  left: -8px;
  top: -3px;
`;
const Badge = styled.span`
  position: absolute;
  right: -3px;
  top: -2px;
  width: 8px;
  height: 8px;
  border-radius: 50%;
  background: #ff3300;
`;
const Tray = styled.div`
  position: absolute;
  right: 0;
  bottom: 2px;
  width: 56px;
  height: 25px;
  display: flex;
  align-items: center;
  justify-content: space-between;
  padding: 0 4px;
  background: linear-gradient(#cfd6d6 0, #999 3px, #8a8f8f 8px, #636363 9px);
`;

const SogouLogo = ({ size }: { size: number }) => (
  <svg width={size} height={size} viewBox="0 0 28 28">
    <path d="m2 4 20-3q3 0 3.500 3L28 22q0 3-3 3.500L8 28q-3 0-3.500-3L.5 8Q0 5 2 4z" fill="#f4511e" />
    <path d="M22 8Q12 5.500 9 10q-2 4 6 4.500t6 4.500q-4 4-14 1" fill="none" stroke="#fff" strokeWidth="4.200" strokeLinecap="round" />
  </svg>
);

const Cmd = ({ icon, children, off, caret }: { icon: string; children: React.ReactNode; off?: boolean; caret?: boolean }) => (
  <Command type="button" $off={off}><Icon name={icon} />{children}{caret && <Caret />}</Command>
);

const firstTools = ['newFile', 'checkFiles', 'open', 'disk', 'disks', 'dim', 'pdfDisk', 'copyDisk', 'swapDisk', 'undo'];
const midTools = ['printOk', 'printGray', 'corner', 'letterA', 'blueBox', 'list', 'listSync', 'cascade'];
const lastTools = ['erasePage', 'print', 'views', 'pageCube', 'fx', 'closeX', 'redX'];
const tabs = ['表', '注释', '草绘', 'AutobuildZ', '继承迁移', '分析', '审阅', '工具', '视图', '框架', 'MCADEx Tools', '歆锐标注', '标注工具', 'FreeCreoTools'];
const viewTools = ['zoomFit', 'zoomIn', 'zoomOut', 'repaint', 'shade', 'savedView', 'datumAll', 'planeEye', 'axisEye', 'pointEye', 'csysEye'];
const modelRows: [string, string, ('right' | 'down')?][] = [
  ['group', '组LOCAL_GROUP', 'right'], ['extrude', '拉伸 1'], ['shell', '壳 1'], ['datum', 'DTM1'],
  ['rib', 'Trajectory Rib 1'], ['section', '截面', 'down'],
];

const tool = (name: string) => <ToolButton key={name} type="button" aria-label={name}><Icon name={name} /></ToolButton>;

export default function App() {
  return (
    <Page>
      <GlobalStyle />
      <Toolbar>
        <ToolButton type="button" $w={18} aria-label="window"><Icon name="window" /></ToolButton>
        <ToolDivider $after={3} />
        {firstTools.map(tool)}
        <ToolButton type="button" $w={15} aria-label="undo list"><Caret $color="#aaa" /></ToolButton>
        {tool('redo')}
        <ToolButton type="button" $w={13} aria-label="redo list"><Caret $color="#aaa" /></ToolButton>
        {tool('green')}
        <SelectTool>
          <ToolButton type="button" $w={23} aria-label="select"><Icon name="marquee" /></ToolButton>
          <SelectCaret type="button" $w={13} aria-label="select list"><Caret /></SelectCaret>
        </SelectTool>
        {midTools.map(tool)}
        <ToolButton type="button" $w={14} aria-label="windows"><Caret /></ToolButton>
        {lastTools.map(tool)}
        <ToolDivider />
        <ToolButton type="button" aria-label="customize">
          <svg width="9" height="8" viewBox="0 0 9 8"><path d="M0 0h9v1H0zM0 3h9L4.500 8z" fill="#333" /></svg>
        </ToolButton>
        <AppTitle>PRT0001 (活动的) - PTC Creo Parametric</AppTitle>
      </Toolbar>

      <TabRow>
        <FileTab type="button">文件<Caret $color="#666" /></FileTab>
        <ActiveTab type="button">布局</ActiveTab>
        {tabs.map(t => <Tab key={t} type="button" $latin={/^[A-Z]/.test(t)}>{t}</Tab>)}
      </TabRow>

      <Ribbon>
        <Group $w={157}>
          <GroupBody>
            <BigCommand type="button" $w={38}>
              <BigArt>
                <svg width="32" height="36" viewBox="0 0 32 36">
                  <path d="M1.500 10.500h8v13h9v8h-17z" fill="#fff" stroke="#888" />
                  <path d="M20 8V4q4-5 8 0v4" fill="none" stroke="#333" strokeWidth="2" />
                  <path d="M18 7h12v9H18z" fill="#333" />
                  <path d="M20 27.500h7" stroke="#333" strokeDasharray="3 1" /><path d="m26 24 4 3.500-4 3.500z" fill="#333" />
                </svg>
              </BigArt>
              <span>锁定视<br />图移动</span>
            </BigCommand>
            <Column $left={7}>
              <Cmd icon="newPage">新页面</Cmd>
              <Cmd icon="pageSetup">页面设置</Cmd>
              <Cmd icon="movePage">移动或复制页面</Cmd>
            </Column>
          </GroupBody>
          <GroupLabel>文档</GroupLabel>
        </Group>
        <Group $w={59}>
          <GroupBody>
            <Column $left={7}>
              <Cmd icon="graph" off>图形</Cmd>
              <Cmd icon="overlay">叠加</Cmd>
              <Cmd icon="object">对象</Cmd>
            </Column>
          </GroupBody>
          <GroupLabel>插入<Caret /></GroupLabel>
        </Group>
        <Group $w={275}>
          <GroupBody>
            <BigCommand type="button" $w={46}>
              <BigArt>
                <svg width="32" height="32" viewBox="0 0 32 32" stroke="#5fb0cf" strokeLinejoin="round">
                  <defs><linearGradient id="ice" x1="0" x2="1" y2="1"><stop offset="0" stopColor="#aeeef8" /><stop offset=".5" stopColor="#e6fcff" /><stop offset="1" stopColor="#a5e2f4" /></linearGradient></defs>
                  <path d="M1 19 8 5h20l3 5-6 17H5z" fill="url(#ice)" />
                  <path d="m21 19 7-14 3 5-6 17z" fill="#5aaed0" />
                  <path d="M1 19h20" fill="none" stroke="#9bd8ea" />
                </svg>
              </BigArt>
              <span>绘图<br />模型</span>
            </BigCommand>
            <BigCommand type="button" $w={34}>
              <BigArt>
                <svg width="32" height="32" viewBox="0 0 32 32" fill="none" stroke="#444" strokeLinejoin="round">
                  <path d="m1 18 7-13h19l4 6-6 16H5zM1 18h19l5 9M20 18l7-13M22 21l7-13" />
                </svg>
              </BigArt>
              <span>常规<br />视图</span>
            </BigCommand>
            <Column $left={7} $w={76}>
              <Cmd icon="viewTrio">投影视图</Cmd>
              <Cmd icon="detail">详细视图</Cmd>
              <Cmd icon="auxiliary">辅助视图</Cmd>
            </Column>
            <Column $left={0}>
              <Cmd icon="revolved">旋转视图</Cmd>
              <Cmd icon="alignViews" off>复制并对齐视图</Cmd>
              <Cmd icon="drawView">绘图视图</Cmd>
            </Column>
          </GroupBody>
          <GroupLabel>模型视图<Caret /></GroupLabel>
        </Group>
        <Group $w={183}>
          <GroupBody>
            <Column $left={7} $w={76}>
              <Cmd icon="partDisplay">元件显示</Cmd>
              <Cmd icon="edgeDisplay">边显示</Cmd>
              <Cmd icon="arrowView">箭头</Cmd>
            </Column>
            <Column $left={0}>
              <Cmd icon="hatch" off>剖面线/填充</Cmd>
              <Cmd icon="grayBox" off>转换为绘制组</Cmd>
              <Cmd icon="toPage" off>移动到页面</Cmd>
            </Column>
          </GroupBody>
          <GroupLabel>编辑<Caret /></GroupLabel>
        </Group>
        <Group $w={119}>
          <GroupBody>
            <Column $left={7}>
              <Cmd icon="eraseView">拭除视图</Cmd>
              <Cmd icon="restoreView" off>恢复视图</Cmd>
              <Cmd icon="modEdge">显示已修改的边</Cmd>
            </Column>
          </GroupBody>
          <GroupLabel>显示<Caret /></GroupLabel>
        </Group>
        <Group $w={198}>
          <GroupBody>
            <BigCommand type="button" $w={46}>
              <BigArt>
                <svg width="30" height="30" viewBox="0 0 30 30">
                  <path d="M1 17 7 2h2l5 12M4 12h8" fill="none" stroke="#333" strokeWidth="2" />
                  <path d="M6 29h7M18 29h10M9 28l8-20M12 22h11" fill="none" stroke="#2b8ec6" strokeWidth="2" />
                  <path d="m17 6 8 23" stroke="#2b8ec6" strokeWidth="4" />
                </svg>
              </BigArt>
              <span>文本<br />样式</span>
            </BigCommand>
            <BigCommand type="button" $w={34}>
              <BigArt>
                <svg width="32" height="28" viewBox="0 0 32 28">
                  <path d="m15 19 3-6L31 1v4L19 17z" fill="#e6dcd6" stroke="#888" />
                  <path d="m19 16 12-12v2L20 17z" fill="#9c4a3c" />
                  <path d="m13 22 3-6 3 2z" fill="#ddd" stroke="#666" />
                  <path d="M0 24h18" stroke="#2b9be0" strokeWidth="2" strokeDasharray="3 1" /><path d="M19 24.500h13" stroke="#888" strokeDasharray="4 2" />
                </svg>
              </BigArt>
              <span>线型</span>
            </BigCommand>
            <ShortRule />
            <Column $left={0}>
              <Cmd icon="arrowStyle" caret>箭头样式</Cmd>
              <Cmd icon="repeatFmt" off>重复上一格式</Cmd>
              <Cmd icon="link" off>超链接</Cmd>
            </Column>
          </GroupBody>
          <GroupLabel>格式<Caret /></GroupLabel>
        </Group>
        <Group $w={190}>
          <GroupBody>
            <Column $left={7} $w={89}>
              <Cmd icon="green" caret>符合库</Cmd>
              <Cmd icon="green" caret>批量处理</Cmd>
              <Cmd icon="green" caret>智能标注</Cmd>
            </Column>
            <Column $left={0}>
              <Cmd icon="pdf">生成PDF文件</Cmd>
            </Column>
          </GroupBody>
          <GroupLabel>Creo中文插件</GroupLabel>
        </Group>
      </Ribbon>

      <Work>
        <Side>
          <SideTabs>
            <SideTab type="button" $active aria-label="tree"><Icon name="treeNodes" /></SideTab>
            <SideTab type="button" aria-label="folders"><Icon name="folders" /></SideTab>
            <SideTab type="button" aria-label="favorites"><Icon name="starFolder" /></SideTab>
            <SideTabRest />
          </SideTabs>
          <Panels>
            <PanelHead $h={29}>
              <Fold /><PanelTitle>绘图树</PanelTitle>
              <HeadTool type="button" aria-label="settings"><Icon name="list" size={20} /><Caret /></HeadTool>
            </PanelHead>
            <DrawTree>
              <TreeItem $depth={0}><Icon name="drawSheet" />绘图 PRT0001.DRW 的第 1 页</TreeItem>
              <TreeItem $depth={1}><span><Icon name="wireBox" size={20} /></span>new_view_1</TreeItem>
              <TreeItem $depth={1}><span><Icon name="wireBox" size={20} /></span>new_view_6</TreeItem>
              <TreeItem $depth={1}><span><Icon name="viewTrio" /></span>左边_2</TreeItem>
              <TreeItem $depth={1}><span><Icon name="viewTrio" /></span>顶部_4</TreeItem>
            </DrawTree>
            <PanelHead $h={33} $top={3}>
              <Fold /><PanelTitle>模型树</PanelTitle>
              <HeadTool type="button" aria-label="show"><Icon name="blueBox" size={20} /><Caret /></HeadTool>
              <HeadTool type="button" aria-label="tools"><Icon name="tools" size={18} /><Caret /></HeadTool>
              <HeadTool type="button" aria-label="settings"><Icon name="list" size={18} /><Caret /></HeadTool>
              <HeadTool type="button" aria-label="hide"><Icon name="treeHide" size={20} /></HeadTool>
            </PanelHead>
            <ModelArea>
              <ColumnHead><span>ptc_common_name</span></ColumnHead>
              <TableClip>
                <ModelTable>
                  <tbody>
                    <tr><td><NodeCell $root><Icon name="part" />PRT0001.PRT</NodeCell></td><td>prt0001.prt</td></tr>
                    {modelRows.map(([icon, label, dir]) => (
                      <tr key={label}><td><NodeCell><Twist $dir={dir} /><Icon name={icon} />{label}</NodeCell></td><td /></tr>
                    ))}
                  </tbody>
                </ModelTable>
              </TableClip>
              <VScroll>
                <Arrow type="button" $turn={0} aria-label="up" /><Thumb $vertical $size={113} /><Track />
                <Arrow type="button" $turn={180} aria-label="down" />
              </VScroll>
            </ModelArea>
            <HScrolls>
              <HScroll $w={136}><Arrow type="button" $turn={-90} aria-label="left" /><Thumb $size={99} /><Track /><Arrow type="button" $turn={90} aria-label="right" /></HScroll>
              <HScroll $w={126}><Arrow type="button" $turn={-90} aria-label="left" /><Thumb $size={16} /><Track /><Arrow type="button" $turn={90} aria-label="right" /></HScroll>
            </HScrolls>
          </Panels>
        </Side>

        <Stage>
          <Canvas>
            <Drawing />
            <ViewBar>
              {viewTools.map((n, i) => (
                <ViewTool key={n} type="button" aria-label={n}><Icon name={n} />{i > 3 && i < 7 && <CornerMark />}</ViewTool>
              ))}
            </ViewBar>
          </Canvas>
          <SheetBar>
            <SheetNav>
              <svg width="66" height="12" viewBox="0 0 66 12">
                <path d="M6 2v8L0 6zM11 2v8L5 6zM51 2v8l6-4zM56 2v8l6-4z" fill="#666" />
                <path d="M27 2v8l-7-4zM35 2v8l7-4z" fill="#999" />
              </svg>
            </SheetNav>
            <AddSheet type="button">+</AddSheet>
            <SheetTab type="button">页面&nbsp; 1</SheetTab>
            <SheetRest />
          </SheetBar>
        </Stage>
        <Edge />
      </Work>

      <GifWindow>
        <GifTitle>
          <svg width="16" height="16" viewBox="0 0 16 16">
            <path d="M0 2h16v12H0z" fill="#222" /><path d="M1 4h2M5 4h2M9 4h2M1 12h2M5 12h2M9 12h2" stroke="#fff" strokeWidth="1.500" />
            <path d="M12 1h3v5h-3z" fill="#2aa" /><path d="M3 6.500H1v3h2V8M6 6v4M9 10V6h2M9 8h2" stroke="#fff" fill="none" />
          </svg>
          <GifName>Gif-...</GifName>
          <Caption type="button" $w={28} aria-label="minimize"><svg width="13" height="4"><path d="M.5.500h12v3H.5z" fill="#fff" stroke="#666" /></svg></Caption>
          <Caption type="button" $w={27} aria-label="maximize"><svg width="10" height="8"><path d="M.5.500h9v7h-9z" fill="#fff" stroke="#aab" /></svg></Caption>
          <Caption type="button" $w={47} $red aria-label="close"><svg width="12" height="10"><path d="m2 1 8 8M10 1 2 9" stroke="#fff" strokeWidth="3" /></svg></Caption>
        </GifTitle>
        <GifBody>
          <GifMenu><button type="button">文件(F)</button><button type="button">编辑(E)</button></GifMenu>
          <GifContent>
            <Notice>Unregistered Copy</Notice>
            <GifRow $h={22}>
              <GifButton type="button" $w={45} disabled>开始</GifButton>
              <GifButton type="button" $w={44} disabled>捕捉</GifButton>
              <GifButton type="button" $w={45}>停止</GifButton>
            </GifRow>
            <GifRow $h={17}><span><Latin>0</Latin> 帧 <Latin>(0</Latin> 字节<Latin>)</Latin></span></GifRow>
            <Legend>捕捉区域</Legend>
            <Line><span>尺寸：</span>1352x724</Line>
            <Line><span>左上角：</span>14,4</Line>
            <GifRow $h={24} $gap={5}>
              <Option><Check type="checkbox" />显示区域</Option>
              <GifButton type="button" $w={70} disabled>选择区域</GifButton>
            </GifRow>
            <GifRow $h={24}><GifButton type="button" $w={71}>刷新屏幕</GifButton></GifRow>
            <LegendLow>捕捉选项</LegendLow>
            <GifRow $h={20} $gap={0}>
              <label htmlFor="fps">帧数/秒：</label>
              <Picker $w={62}><select id="fps"><option>10 fps</option></select><Down /></Picker>
            </GifRow>
            {['透明', '记录时间信息', '循环', '描边', '捕捉光标'].map(t => (
              <Option key={t}><Check type="checkbox" defaultChecked />{t}</Option>
            ))}
            <Option><Check type="checkbox" defaultChecked /><span><Latin>Explorer 2.0</Latin> 兼容</span></Option>
            <GifRow $h={20} $gap={0}>
              <label htmlFor="scale">录制比例：</label>
              <Picker $w={57}><select id="scale"><option>100%</option></select><Down /></Picker>
            </GifRow>
          </GifContent>
        </GifBody>
      </GifWindow>
      <RedDot />
      <Meter />

      <InputBar>
        <Logo><SogouLogo size={28} /></Logo>
        <svg width="14" height="14" viewBox="0 0 14 14" fill="none" stroke="#2f66cc" strokeWidth="2"><path d="M1 14 7 1l6 13M3 10h8" /></svg>
        <svg width="13" height="13" viewBox="0 0 13 13"><path d="M9 0q6 5 2 10-5 5-11 0 9 0 9-10z" fill="#2f66cc" /></svg>
        <svg width="10" height="12" viewBox="0 0 10 12" fill="#2f66cc"><circle cx="2" cy="4" r="1.800" /><path d="M6 6h3v3q-1 2-3 2 1-1 1-2H6z" /></svg>
        <svg width="16" height="12" viewBox="0 0 16 12"><rect x=".7" y=".7" width="14.600" height="10.600" rx="1" fill="#fff" stroke="#2f66cc" strokeWidth="1.400" /><path d="M2.500 3.500h11M2.500 6h11M4.500 8.500h7" stroke="#2f66cc" strokeWidth="1.500" strokeDasharray="1.500 1" /></svg>
        <svg width="16" height="16" viewBox="0 0 16 16"><circle cx="6" cy="4" r="3" fill="#2f66cc" /><path d="M0 14V9q6-4 11 0v5z" fill="#2f66cc" /><text x="5" y="15" fontSize="9" fontWeight="700" fill="#2f66cc" stroke="#fff" strokeWidth="2" paintOrder="stroke" fontFamily="Liberation Sans">24</text></svg>
        <svg width="14" height="14" viewBox="0 0 14 14"><path d="M0 2 4 0q3 3 6 0l4 2-1 4-2-.5V14H3V5.500L1 6z" fill="#2f66cc" /></svg>
        <svg width="14" height="14" viewBox="0 0 14 14"><path d="m1.500 12.500 7-7" stroke="#2f66cc" strokeWidth="3" strokeLinecap="round" /><path d="M10 0q-4 1-3 5 2 4 6 1l1-3-3 1-1-1z" fill="#2f66cc" /></svg>
        <Badge />
      </InputBar>
      <Tray>
        <svg width="9" height="17" viewBox="0 0 9 17"><path d="M1 0v17M4.500 0v17M8 0v17" stroke="#222" strokeWidth="1.500" strokeDasharray="1.500 2" /></svg>
        <SogouLogo size={16} />
        <svg width="7" height="14" viewBox="0 0 7 14" fill="#fff"><path d="M1 1h5v2H1zM1 9h5l-2.500 3z" /></svg>
      </Tray>
    </Page>
  );
}
